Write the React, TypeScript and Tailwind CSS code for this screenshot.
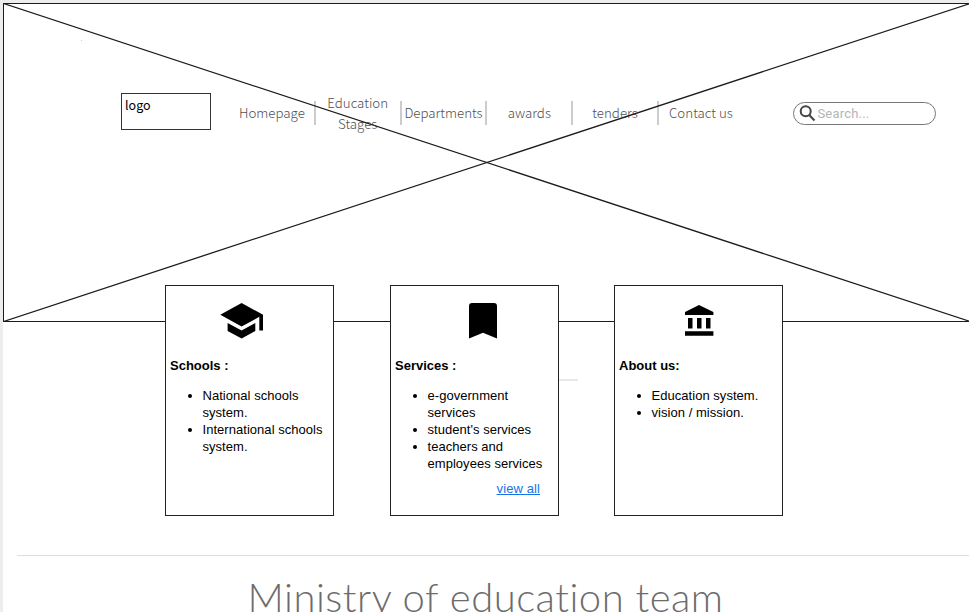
import type { ReactNode } from 'react';

const navItems = ['Homepage', 'Education Stages', 'Departments', 'awards', 'tenders', 'Contact us'];

function Card({ icon, title, items, children }: {
  icon: ReactNode; title: string; items: string[]; children?: ReactNode;
}) {
  return (
    <section className="h-[231px] w-[169px] shrink-0 border border-[#222] bg-white pl-[4px] pt-[10px] text-[13px] leading-[17px] text-black">
      <div className="flex h-[50px] justify-center">{icon}</div>
      <h2 className="mt-[11px] font-bold">{title}</h2>
      <ul className="mt-[13px] list-disc pl-[32.5px] tracking-[0.04px]">
        {items.map((item) => <li key={item} className="whitespace-pre-line">{item}</li>)}
      </ul>
      {children}
    </section>
  );
}

function SchoolIcon() {
  return (
    <svg className="mr-[20px] h-[50px] w-[48px]" viewBox="0 0 48 50" fill="#000">
      <path d="M2.3 18.8 23.6 7 45 18.8 23.6 30.5Z" />
      <path d="M9.6 27v8l14 7.5 13.7-7.5v-8l-13.7 7.6Z" />
      <path d="M41.3 18.8H45V34.5h-3.7Z" />
    </svg>
  );
}

function BookmarkIcon() {
  return (
    <svg className="ml-[13px] h-[50px] w-[30px]" viewBox="0 0 30 50">
      <path d="M4 7h22a3 3 0 0 1 3 3v32.5l-14-5.7L1 42.500V10a3 3 0 0 1 3-3Z" />
    </svg>
  );
}

function InstitutionIcon() {
  return (
    <svg className="mr-[3px] h-[50px] w-[32px]" viewBox="0 0 32 50">
      <path d="M2 15.900 16 9l14.400 6.900v3.100H2Z M5 22h4.500v10.500H5Z M14 22h4.500v10.500H14Z M23 22h4.500v10.500H23Z M2 35.300h28.400v4.400H2Z" />
    </svg>
  );
}

export default function App() {
  return (
    <div className="h-[612px] w-[969px] overflow-hidden bg-[#ededed] pl-[3px] pt-[3px] font-['Liberation_Sans',sans-serif]">
      <main className="h-[609px] w-[966px] overflow-hidden bg-white">
        <header className="relative h-[319px] border-y border-l border-[#1c1c1c]">
          <div className="flex items-start pt-[89px]">
            <div className="ml-[117px] h-[37px] w-[90px] border border-[#333] px-[3px] pt-[2px] font-['Noto_Sans_CJK_SC',sans-serif] text-[12.5px] leading-[18px] text-black">logo</div>
            <nav className="ml-[19px] mt-[-2px] flex h-[43px] items-center font-['Noto_Sans_CJK_SC',sans-serif] text-[13.3px] font-light leading-[21px] text-[#505050]">
              {navItems.map((item, index) => (
                <div key={item} className="flex h-[43px] items-center">
                  <a className="flex w-[83.8px] justify-center text-center"><span className="min-w-0">{item}</span></a>
                  {index < navItems.length - 1 && <span className="h-6 w-[2px] bg-[#ccc]" />}
                </div>
              ))}
            </nav>
            <label className="ml-[50.6px] mt-[9px] flex h-[23px] w-[143px] items-center rounded-full border border-[#777] bg-white pl-[5px] font-['Roboto',sans-serif] text-[13px] text-[#b5b5b5]">
              <svg className="h-[17px] w-[18px] shrink-0" viewBox="0 0 18 17" fill="none" stroke="#444" strokeWidth="2">
                <circle cx="6.7" cy="6.3" r="5" /><path d="m10.2 10 5.3 5.5" />
              </svg>
              <span className="tracking-[0.2px]">Search...</span>
            </label>
          </div>
          <svg className="pointer-events-none absolute -left-px -top-px h-[319px] w-[966px]" viewBox="0 0 966 319" stroke="#1c1c1c" strokeWidth="1.3">
            <path d="M.5.5 967 318.5M.5 318.5 967 .5" />
          </svg>
          <span className="absolute left-[77px] top-[36px] h-px w-px bg-[#ccc]" />
        </header>

        <div className="relative -mt-[37px] flex">
          <div className="ml-[162px]">
            <Card icon={<SchoolIcon />} title="Schools :" items={['National schools\nsystem.', 'International schools\nsystem.']} />
          </div>
          <div className="ml-[56px]">
            <Card icon={<BookmarkIcon />} title="Services :" items={['e-government\nservices', "student's services", 'teachers and\nemployees services']}>
              <div className="mt-2 pr-[18px] text-right tracking-[0.1px]"><a className="text-[#1473e6] underline">view all</a></div>
            </Card>
          </div>
          <span className="mt-[94px] h-[2px] w-[19px] bg-[#e9e9e9]" />
          <div className="ml-[36px]">
            <Card icon={<InstitutionIcon />} title="About us:" items={['Education system.', 'vision / mission.']} />
          </div>
        </div>

        <div className="ml-[14px] mt-[39px] h-px bg-[#dedede]" />
        <h1 className="ml-[244.5px] mt-[17px] whitespace-nowrap font-['Lato',sans-serif] text-[40px] font-light leading-[48px] tracking-[0.5px] text-[#6c6c6c]">Ministry of education team</h1>
      </main>
    </div>
  );
}
